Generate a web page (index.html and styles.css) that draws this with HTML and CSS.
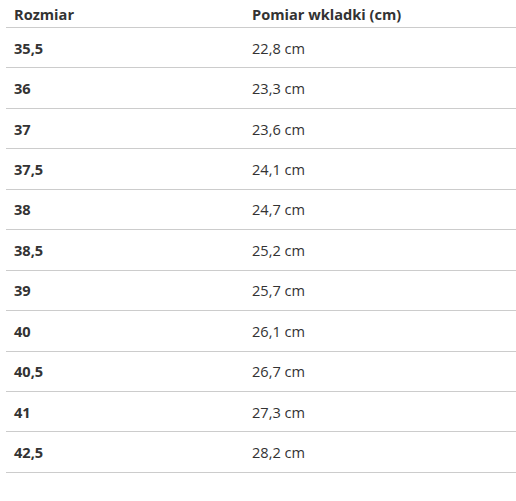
FILE: index.html
```html
<!DOCTYPE html>
<html lang="pl">
<head>
<meta charset="utf-8">
<link rel="stylesheet" href="styles.css">
</head>
<body>
<div class="table">
  <div class="row head"><div class="c1">Rozmiar</div><div class="c2">Pomiar wkladki (cm)</div></div>
  <div class="row"><div class="c1">35,5</div><div class="c2">22,8 cm</div></div>
  <div class="row"><div class="c1">36</div><div class="c2">23,3 cm</div></div>
  <div class="row"><div class="c1">37</div><div class="c2">23,6 cm</div></div>
  <div class="row"><div class="c1">37,5</div><div class="c2">24,1 cm</div></div>
  <div class="row"><div class="c1">38</div><div class="c2">24,7 cm</div></div>
  <div class="row"><div class="c1">38,5</div><div class="c2">25,2 cm</div></div>
  <div class="row"><div class="c1">39</div><div class="c2">25,7 cm</div></div>
  <div class="row"><div class="c1">40</div><div class="c2">26,1 cm</div></div>
  <div class="row"><div class="c1">40,5</div><div class="c2">26,7 cm</div></div>
  <div class="row"><div class="c1">41</div><div class="c2">27,3 cm</div></div>
  <div class="row"><div class="c1">42,5</div><div class="c2">28,2 cm</div></div>
</div>
</body>
</html>
```
FILE: styles.css
```css
html, body {
  margin: 0;
  padding: 0;
  background: #fff;
}
body {
  font-family: "Open Sans", "Liberation Sans", sans-serif;
  font-size: 14.6px;
  color: #333;
  padding-left: 6px;
}
.table {
  display: flex;
  flex-direction: column;
}
.row {
  display: flex;
  align-items: center;
  height: 39.45px;
  border-bottom: 1px solid #cccccc;
}
.row.head {
  height: 27px;
  font-weight: 700;
}
.c1 {
  width: 238px;
  box-sizing: border-box;
  padding-left: 8px;
  font-weight: 700;
}
.c2 {
  flex: 1;
  padding-left: 8px;
}
```
